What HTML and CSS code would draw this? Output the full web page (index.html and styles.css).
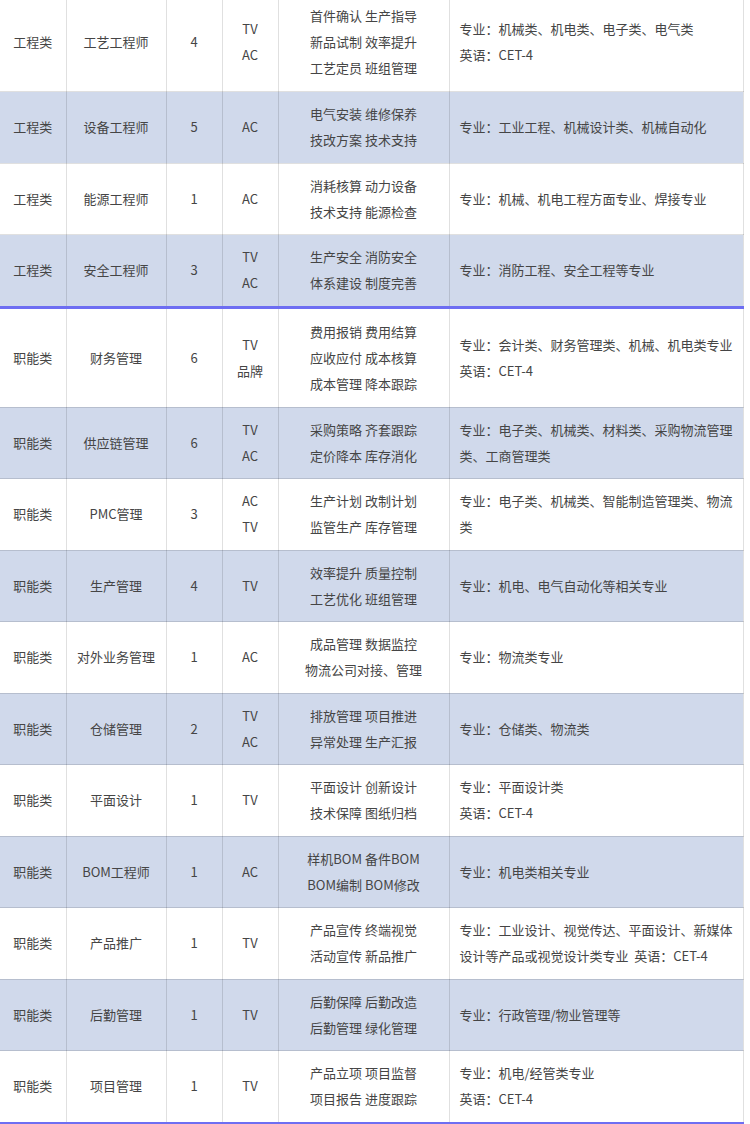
FILE: index.html
```html
<!DOCTYPE html>
<html lang="zh">
<head>
<meta charset="utf-8">
<title>岗位需求</title>
<link rel="stylesheet" href="styles.css">
</head>
<body>
<table class="jobs">
  <colgroup>
    <col class="c-type"><col class="c-name"><col class="c-num"><col class="c-line"><col class="c-duty"><col class="c-req">
  </colgroup>
  <tbody>
    <tr class="tri">
      <td>工程类</td><td>工艺工程师</td><td>4</td><td>TV<br>AC</td>
      <td>首件确认 生产指导<br>新品试制 效率提升<br>工艺定员 班组管理</td>
      <td class="req">专业：机械类、机电类、电子类、电气类<br>英语：CET-4</td>
    </tr>
    <tr>
      <td>工程类</td><td>设备工程师</td><td>5</td><td>AC</td>
      <td>电气安装 维修保养<br>技改方案 技术支持</td>
      <td class="req">专业：工业工程、机械设计类、机械自动化</td>
    </tr>
    <tr>
      <td>工程类</td><td>能源工程师</td><td>1</td><td>AC</td>
      <td>消耗核算 动力设备<br>技术支持 能源检查</td>
      <td class="req">专业：机械、机电工程方面专业、焊接专业</td>
    </tr>
    <tr class="group-end">
      <td>工程类</td><td>安全工程师</td><td>3</td><td>TV<br>AC</td>
      <td>生产安全 消防安全<br>体系建设 制度完善</td>
      <td class="req">专业：消防工程、安全工程等专业</td>
    </tr>
    <tr class="tri">
      <td>职能类</td><td>财务管理</td><td>6</td><td>TV<br>品牌</td>
      <td>费用报销 费用结算<br>应收应付 成本核算<br>成本管理 降本跟踪</td>
      <td class="req">专业：会计类、财务管理类、机械、机电类专业<br>英语：CET-4</td>
    </tr>
    <tr>
      <td>职能类</td><td>供应链管理</td><td>6</td><td>TV<br>AC</td>
      <td>采购策略 齐套跟踪<br>定价降本 库存消化</td>
      <td class="req">专业：电子类、机械类、材料类、采购物流管理类、工商管理类</td>
    </tr>
    <tr>
      <td>职能类</td><td>PMC管理</td><td>3</td><td>AC<br>TV</td>
      <td>生产计划 改制计划<br>监管生产 库存管理</td>
      <td class="req">专业：电子类、机械类、智能制造管理类、物流类</td>
    </tr>
    <tr>
      <td>职能类</td><td>生产管理</td><td>4</td><td>TV</td>
      <td>效率提升 质量控制<br>工艺优化 班组管理</td>
      <td class="req">专业：机电、电气自动化等相关专业</td>
    </tr>
    <tr>
      <td>职能类</td><td>对外业务管理</td><td>1</td><td>AC</td>
      <td>成品管理 数据监控<br>物流公司对接、管理</td>
      <td class="req">专业：物流类专业</td>
    </tr>
    <tr>
      <td>职能类</td><td>仓储管理</td><td>2</td><td>TV<br>AC</td>
      <td>排放管理 项目推进<br>异常处理 生产汇报</td>
      <td class="req">专业：仓储类、物流类</td>
    </tr>
    <tr>
      <td>职能类</td><td>平面设计</td><td>1</td><td>TV</td>
      <td>平面设计 创新设计<br>技术保障 图纸归档</td>
      <td class="req">专业：平面设计类<br>英语：CET-4</td>
    </tr>
    <tr>
      <td>职能类</td><td>BOM工程师</td><td>1</td><td>AC</td>
      <td>样机BOM 备件BOM<br>BOM编制 BOM修改</td>
      <td class="req">专业：机电类相关专业</td>
    </tr>
    <tr>
      <td>职能类</td><td>产品推广</td><td>1</td><td>TV</td>
      <td>产品宣传 终端视觉<br>活动宣传 新品推广</td>
      <td class="req">专业：工业设计、视觉传达、平面设计、新媒体设计等产品或视觉设计类专业&nbsp; 英语：CET-4</td>
    </tr>
    <tr>
      <td>职能类</td><td>后勤管理</td><td>1</td><td>TV</td>
      <td>后勤保障 后勤改造<br>后勤管理 绿化管理</td>
      <td class="req">专业：行政管理/物业管理等</td>
    </tr>
    <tr class="group-end">
      <td>职能类</td><td>项目管理</td><td>1</td><td>TV</td>
      <td>产品立项 项目监督<br>项目报告 进度跟踪</td>
      <td class="req">专业：机电/经管类专业<br>英语：CET-4</td>
    </tr>
  </tbody>
</table>
</body>
</html>
```

FILE: styles.css
```css
html, body {
  margin: 0;
  padding: 0;
  background: #ffffff;
}

body {
  font-family: "Noto Sans CJK SC", "Noto Sans", sans-serif;
  font-size: 13px;
  color: #454545;
}

.jobs {
  border-collapse: collapse;
  table-layout: fixed;
  width: 743px;
  margin-top: -8px;
}

.c-type { width: 66px; }
.c-name { width: 100px; }
.c-num  { width: 56px; }
.c-line { width: 56px; }
.c-duty { width: 171px; }
.c-req  { width: 294px; }

.jobs td {
  border: 1px solid rgba(0, 0, 0, 0.12);
  padding: 9.25px 4px;
  line-height: 26px;
  text-align: center;
  vertical-align: middle;
  word-break: break-all;
}

.jobs tr.tri td {
  padding-top: 10px;
  padding-bottom: 10px;
}

.jobs td:first-child {
  border-left: none;
}

.jobs td.req {
  text-align: left;
  padding-left: 10px;
  padding-right: 9px;
}

.jobs tr:nth-child(even) td {
  background: #d0d9eb;
}

.jobs tr.group-end td {
  border-bottom: 3px solid #6e6ef2;
}
```
